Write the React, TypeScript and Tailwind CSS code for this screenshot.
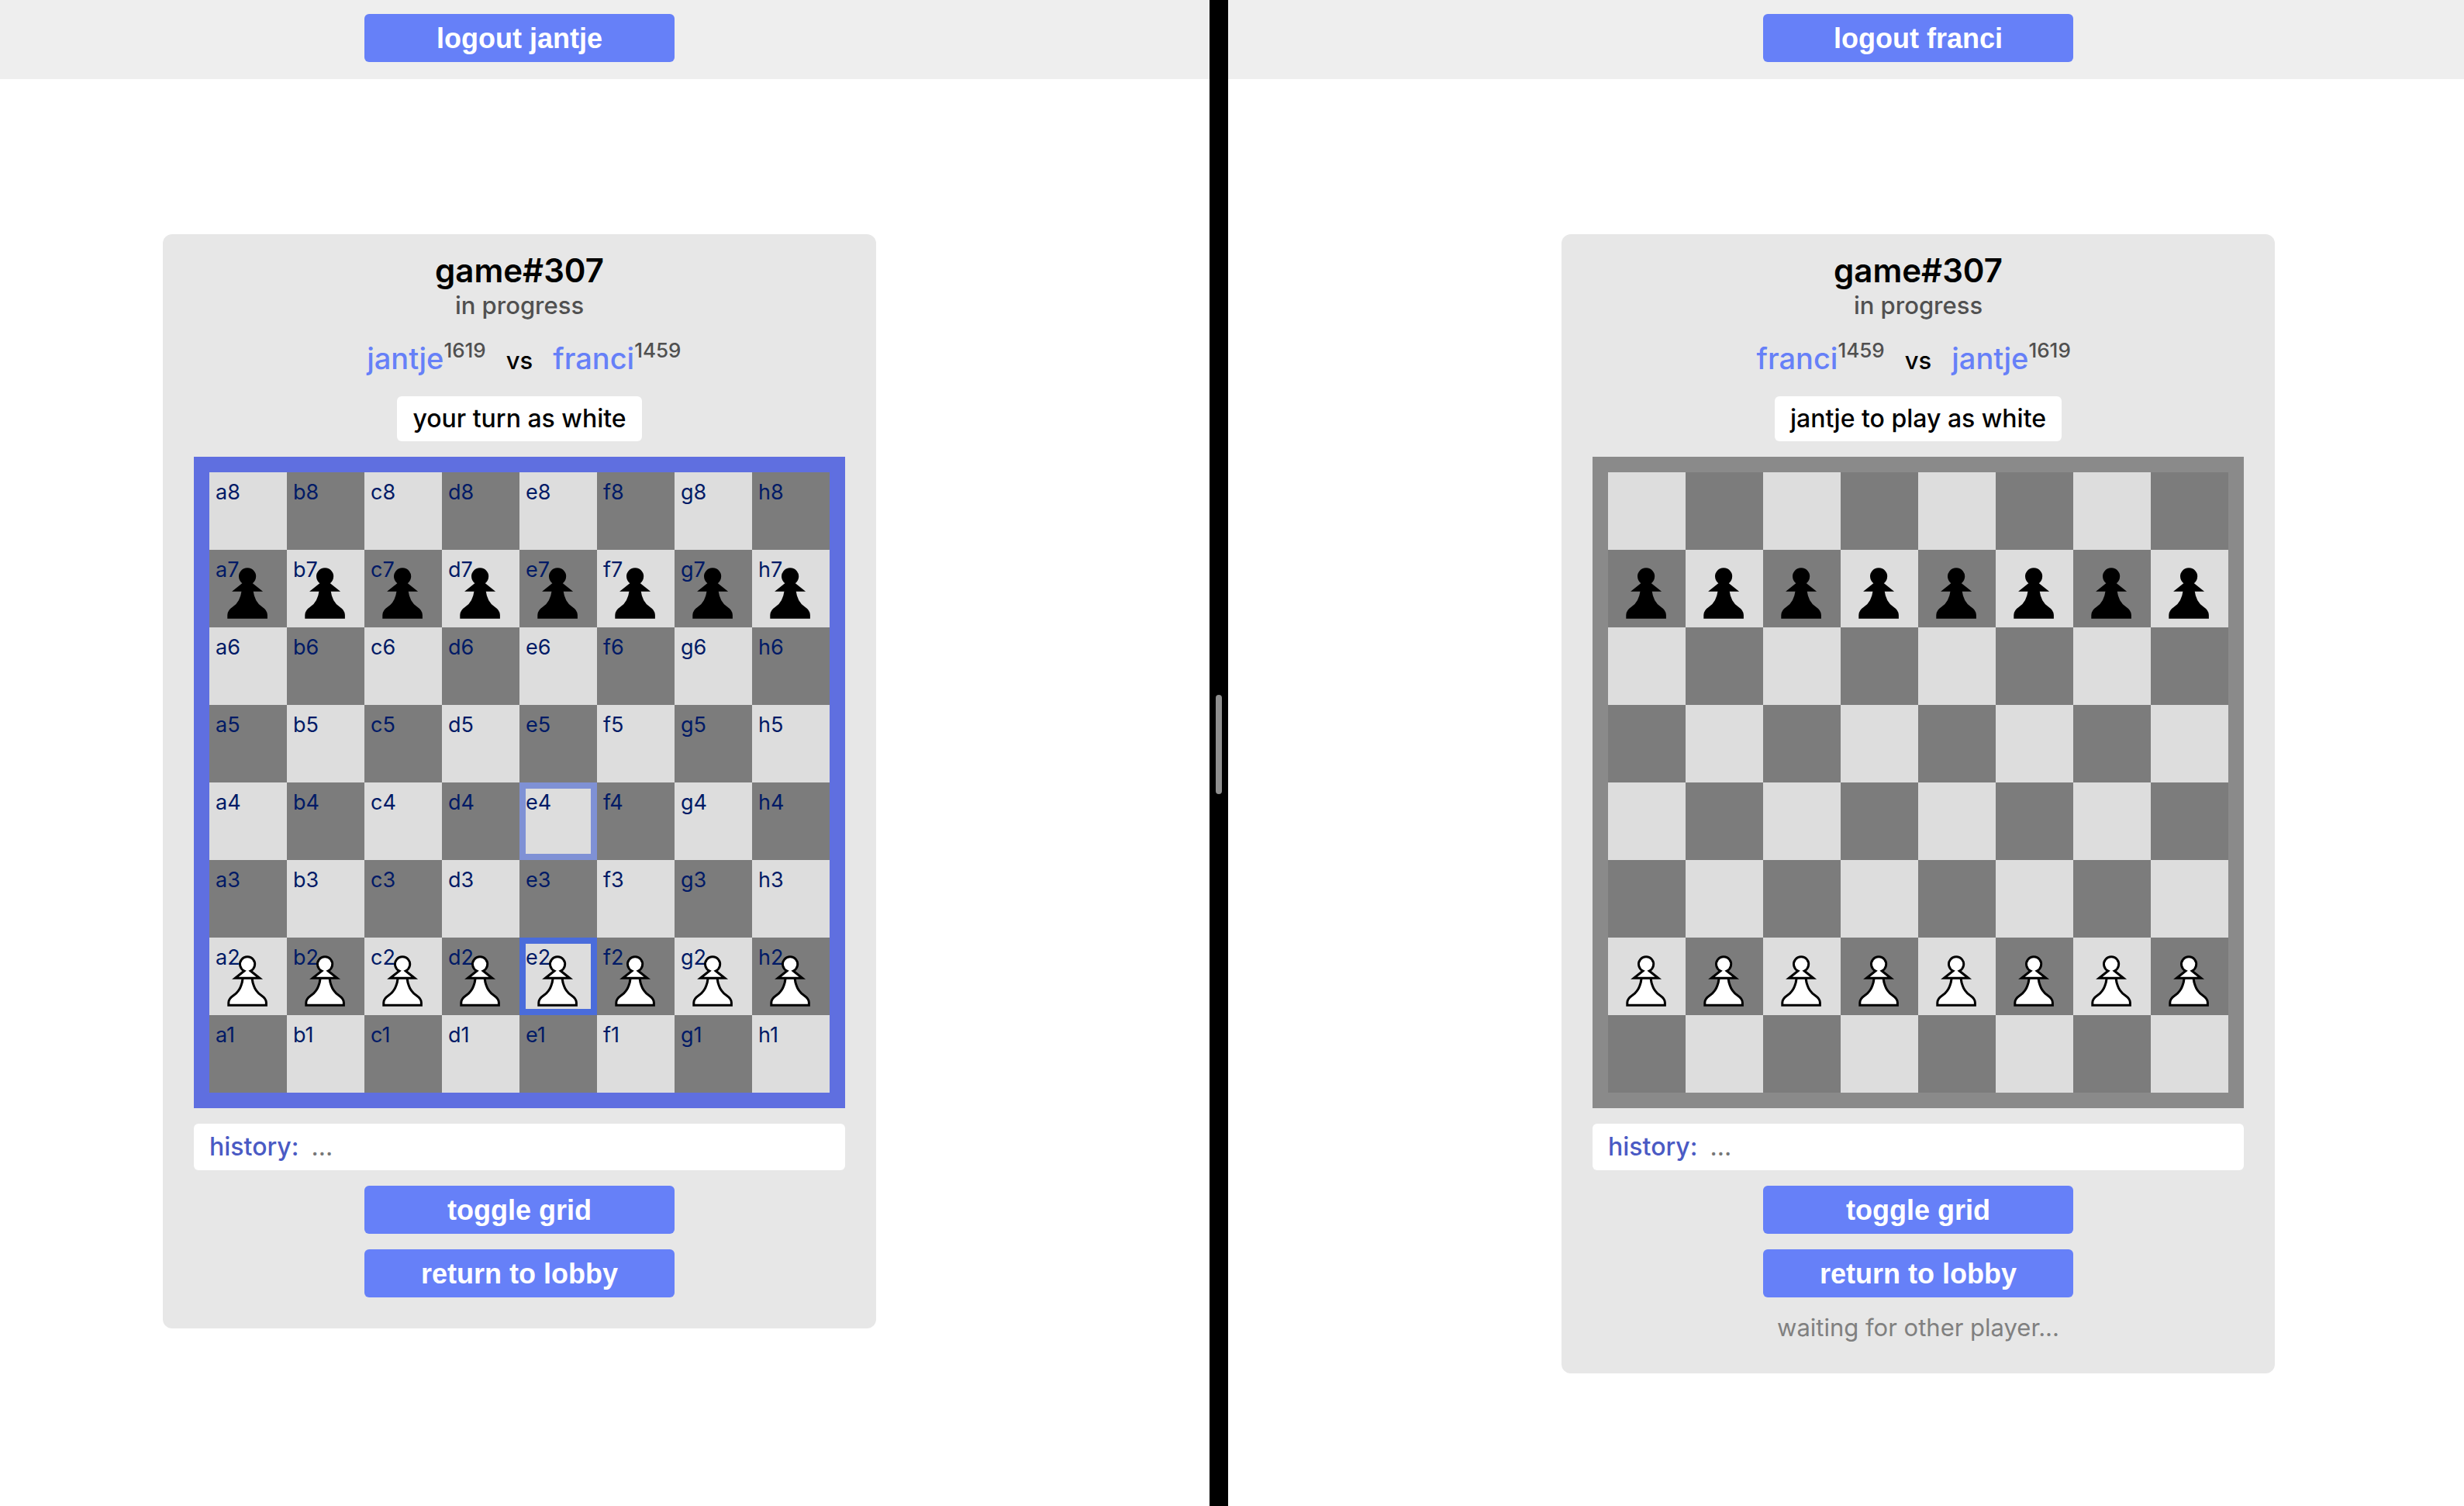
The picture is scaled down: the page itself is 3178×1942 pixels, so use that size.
import { useState } from "react";

type Player = { name: string; rating: number };

type GameProps = {
  players: [Player, Player];
  turn: string;
  active?: boolean;
  waiting?: boolean;
};

const jantje: Player = { name: "jantje", rating: 1619 };
const franci: Player = { name: "franci", rating: 1459 };

const files = ["a", "b", "c", "d", "e", "f", "g", "h"];
const ranks = [8, 7, 6, 5, 4, 3, 2, 1];

function Pawn({ white }: { white: boolean }) {
  return (
    <svg
      viewBox="0 0 100 100"
      className="size-full [grid-area:1/1]"
      fill={white ? "#fff" : "#000"}
      stroke="#000"
      strokeWidth="3"
      aria-hidden="true"
    >
      <path d="M43.2 52C42.2 62 38 70 31.3 74.6C26.6 77.8 24.8 80 24.8 84V87.3H73.4V84C73.4 80 71.6 77.8 66.9 74.6C60.2 70 56 62 55 52Z" />
      <path d="M45 43A9.6 9.6 0 1 1 53.2 43L64.8 52.2H33.4Z" strokeMiterlimit="6" />
    </svg>
  );
}

function Board({ active, grid }: { active: boolean; grid: boolean }) {
  return (
    <div
      className={`grid w-full grid-cols-8 border-20 ${
        active ? "border-[#5f6fe0]" : "border-[#8a8a8a]"
      }`}
    >
      {ranks.map((rank, r) =>
        files.map((file, f) => {
          const id = `${file}${rank}`;
          const shade = (r + f) % 2 === 0 ? "bg-[#ddd]" : "bg-[#7c7c7c]";
          const mark = !active
            ? ""
            : id === "e4"
              ? "inset-ring-8 inset-ring-[#7f91d5]"
              : id === "e2"
                ? "inset-ring-8 inset-ring-[#4a6cdb]"
                : "";
          return (
            <button
              key={id}
              type="button"
              aria-label={id}
              className={`grid aspect-square w-full overflow-hidden ${shade} ${mark}`}
            >
              {grid && (
                <span className="px-2 pt-2 text-left text-[27px] leading-9 text-[#001a66] [grid-area:1/1]">
                  {id}
                </span>
              )}
              {(rank === 7 || rank === 2) && <Pawn white={rank === 2} />}
            </button>
          );
        }),
      )}
    </div>
  );
}

function ActionButton({ label, onClick }: { label: string; onClick?: () => void }) {
  return (
    <button
      type="button"
      onClick={onClick}
      className="h-[62px] w-[400px] max-w-full rounded-md bg-[#6680f8] font-['Liberation_Sans',Arial,sans-serif] text-4xl leading-[61px] font-bold text-white"
    >
      {label}
    </button>
  );
}

function PlayerName({ player }: { player: Player }) {
  return (
    <span className="flex items-start">
      <a href={`#${player.name}`} className="text-[38px] leading-[61px] text-[#6680f8]">
        {player.name}
      </a>
      <span className="text-[26px] leading-10 text-[#505050]">{player.rating}</span>
    </span>
  );
}

function Header({ user }: { user: string }) {
  return (
    <header className="flex h-[102px] items-start justify-center pt-[18px]">
      <ActionButton label={`logout ${user}`} />
    </header>
  );
}

function Game({ players, turn, active = false, waiting = false }: GameProps) {
  const [grid, setGrid] = useState(active);
  return (
    <main className="mx-auto mt-[200px] flex w-[920px] max-w-full flex-col items-center rounded-xl bg-[#e7e7e7] px-10 pt-5 pb-10 font-medium">
      <h1 className="text-[42px] leading-[54px] font-semibold">game#307</h1>
      <p className="text-[31px] leading-9 text-[#505050]">in progress</p>
      <div className="mt-5 mb-[13px] grid w-full grid-cols-[1fr_auto_1fr] gap-[26px]">
        <div className="flex justify-end">
          <PlayerName player={players[0]} />
        </div>
        <span className="text-[31px] leading-[66px]">vs</span>
        <PlayerName player={players[1]} />
      </div>
      <p className="rounded-md bg-white px-5 py-2.5 text-[32px] leading-[38px]">{turn}</p>
      <div className="mt-5 w-full font-normal">
        <Board active={active} grid={grid} />
      </div>
      <p className="mt-5 flex w-full gap-4 rounded-md bg-white px-5 py-[11px] text-[32px] leading-[38px]">
        <span className="text-[#4a5ac4]">history:</span>
        <span className="font-normal text-[#777]">...</span>
      </p>
      <div className="mt-5 flex w-full flex-col items-center gap-5">
        <ActionButton label="toggle grid" onClick={() => setGrid(!grid)} />
        <ActionButton label="return to lobby" />
        {waiting && (
          <p className="text-[31px] leading-[38px] font-normal text-[#808080]">
            waiting for other player...
          </p>
        )}
      </div>
    </main>
  );
}

export default function App() {
  return (
    <div className="flex min-h-screen bg-white font-[Inter,sans-serif] text-black">
      <section className="min-w-0 flex-[1560]">
        <div className="bg-[#eee] pr-[220px]">
          <Header user="jantje" />
        </div>
        <div className="pr-[220px]">
          <Game players={[jantje, franci]} turn="your turn as white" active />
        </div>
      </section>
      <div className="flex w-6 shrink-0 items-center justify-center bg-black pb-[22px]">
        <div className="h-32 w-2 rounded-full bg-[#8e8e8e]" />
      </div>
      <section className="min-w-0 flex-[1594]">
        <div className="bg-[#eee] pl-[186px]">
          <Header user="franci" />
        </div>
        <div className="pl-[186px]">
          <Game players={[franci, jantje]} turn="jantje to play as white" waiting />
        </div>
      </section>
    </div>
  );
}
